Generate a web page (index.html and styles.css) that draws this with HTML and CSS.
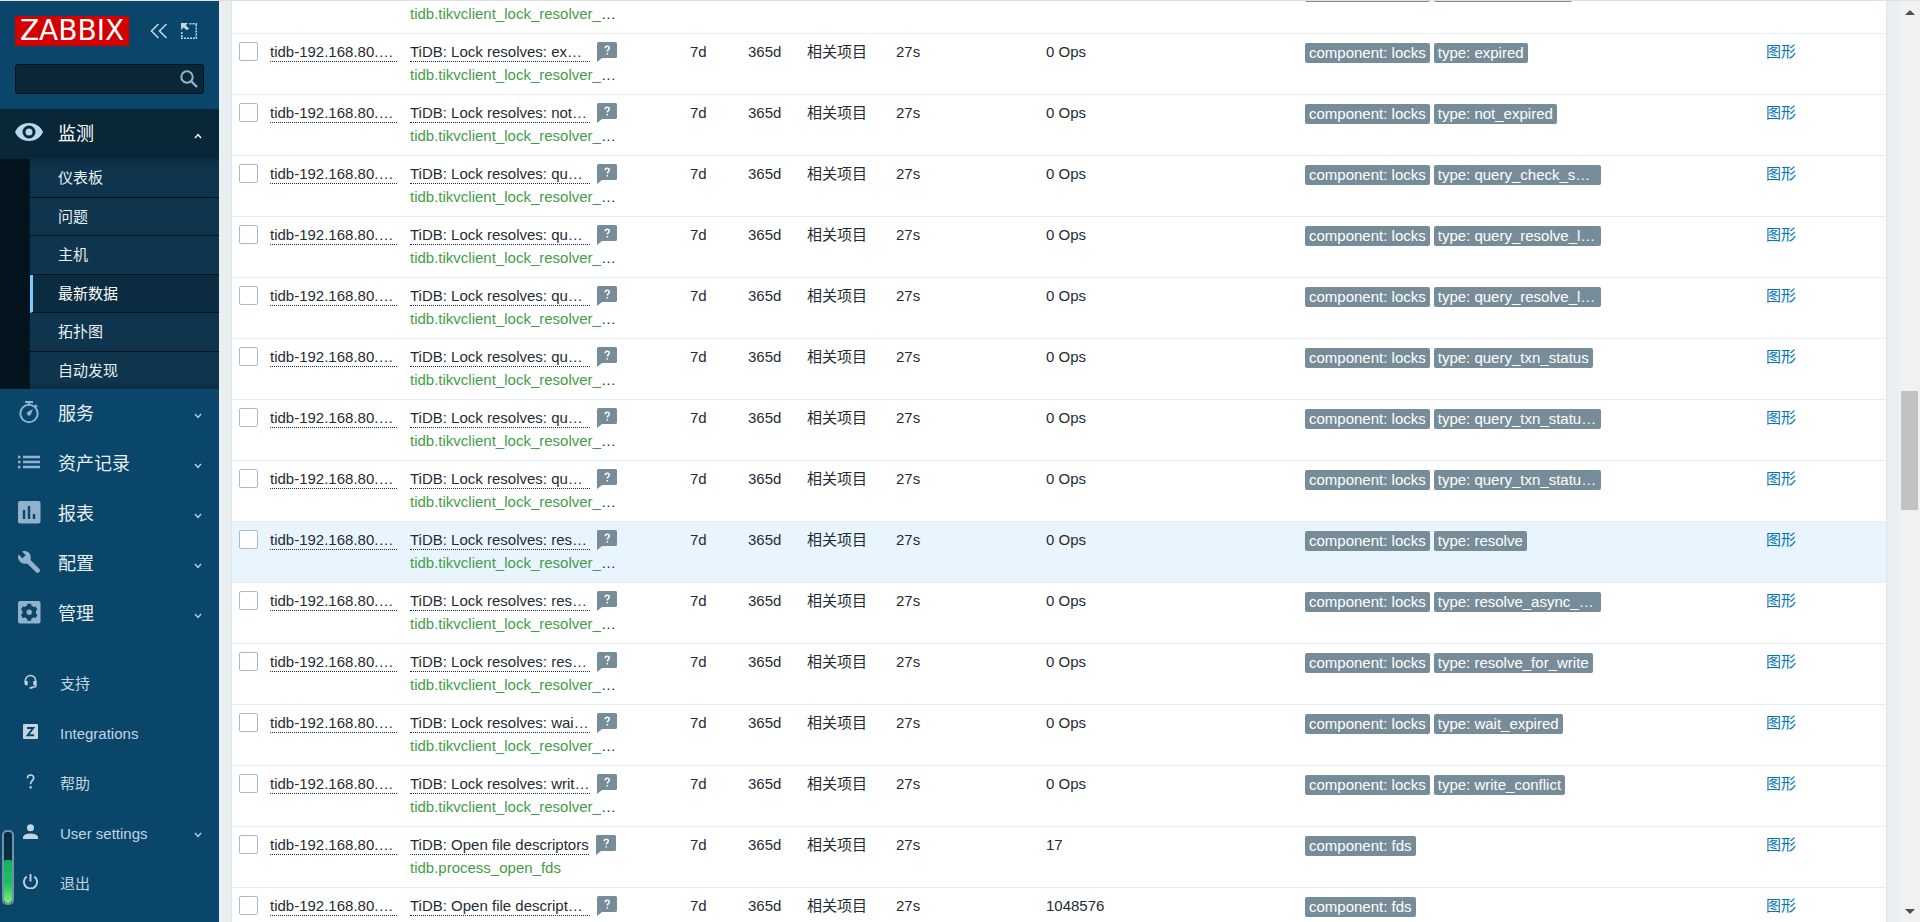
FILE: index.html
```html
<!DOCTYPE html>
<html lang="zh-CN">
<head>
<meta charset="utf-8">
<title>Zabbix - 最新数据</title>
<link rel="stylesheet" href="styles.css">
</head>
<body>
<svg class="defs" aria-hidden="true">
  <symbol id="hint" viewBox="0 0 20 20"><path d="M1.500 0H18.500A1.500 1.500 0 0 1 20 1.500V14.500A1.500 1.500 0 0 1 18.500 16H5L0 20V1.500A1.500 1.500 0 0 1 1.500 0Z" fill="#768d99"/><path d="M8.200 6.200C8.200 3.700 12.300 3.700 12.300 6C12.300 7.600 10.300 7.600 10.300 9.600M10.300 10.900V12.400" fill="none" stroke="#fff" stroke-width="1.500"/></symbol>
  <symbol id="down" viewBox="0 0 8 6"><path d="M1 1L4 4.500L7 1" fill="none" stroke="currentColor" stroke-width="1.400"/></symbol>
</svg>

<aside class="sidebar">
  <header class="brand">
    <a class="logo" href="#">ZABBIX</a>
    <button class="icon-button" type="button" aria-label="Collapse sidebar"><svg width="18" height="16" viewBox="0 0 18 16"><path d="M8.500 1L1.500 8L8.500 15M16.500 1L9.500 8L16.500 15" fill="none" stroke="currentColor" stroke-width="1.600"/></svg></button>
    <button class="icon-button" type="button" aria-label="Hide sidebar"><svg width="16" height="16" viewBox="0 0 16 16"><path d="M0 0H7L4.800 2.200L8 5.400L6 7.300L2.500 4.500L0 7Z" fill="currentColor"/><path d="M8.500 .8H16M15.200 1.500V15M0 15.200H16M.8 9V15" fill="none" stroke="currentColor" stroke-width="1.500" stroke-dasharray="2 1"/></svg></button>
  </header>
  <form class="search">
    <input class="search-input" type="text" aria-label="Search">
    <button class="search-button" type="button" aria-label="Search"><svg width="18" height="18" viewBox="0 0 18 18"><circle cx="7" cy="7" r="5.700" fill="none" stroke="currentColor" stroke-width="2"/><path d="M11 11L17 17" stroke="currentColor" stroke-width="2.400"/></svg></button>
  </form>
  <nav class="menu">
    <a class="menu-item open" href="#"><svg class="menu-icon" viewBox="0 0 28 28"><path d="M0 14C5 2 23 2 28 14C23 26 5 26 0 14Z" fill="#b8d6ec"/><circle cx="14" cy="14" r="5" fill="none" stroke="#0a2738" stroke-width="3"/></svg><span class="label">监测</span><svg class="chevron up"><use href="#down"/></svg></a>
    <div class="submenu">
      <a href="#">仪表板</a>
      <a href="#">问题</a>
      <a href="#">主机</a>
      <a class="selected" href="#">最新数据</a>
      <a href="#">拓扑图</a>
      <a href="#">自动发现</a>
    </div>
    <a class="menu-item" href="#"><svg class="menu-icon" viewBox="0 0 28 28"><circle cx="14" cy="15.500" r="8.700" fill="none" stroke="currentColor" stroke-width="2"/><path d="M10 4H18M14 4V7M20 7L22 9" stroke="currentColor" stroke-width="2" fill="none"/><path d="M18 11L15.700 17A2 2 0 1 1 12.500 14Z" fill="currentColor"/></svg><span class="label">服务</span><svg class="chevron"><use href="#down"/></svg></a>
    <a class="menu-item" href="#"><svg class="menu-icon" viewBox="0 0 28 28"><path d="M3 9H5.500M3 14H5.500M3 19H5.500M8 9H25M8 14H25M8 19H25" stroke="currentColor" stroke-width="2.300"/></svg><span class="label">资产记录</span><svg class="chevron"><use href="#down"/></svg></a>
    <a class="menu-item" href="#"><svg class="menu-icon" viewBox="0 0 28 28"><rect x="3" y="3" width="22.500" height="22.500" rx="2" fill="currentColor"/><path d="M9 12V21M14 8V21M19 16V21" stroke="#0a466a" stroke-width="2.400"/></svg><span class="label">报表</span><svg class="chevron"><use href="#down"/></svg></a>
    <a class="menu-item" href="#"><svg class="menu-icon" viewBox="0 0 28 28"><path d="M7 3.500C11 2 16 4.500 15.800 10L15.500 12L24.500 21C25.400 22 25.300 23 24.500 23.800L23.700 24.600C23 25.200 22 25.200 21.300 24.500L12.200 15.400C7.500 17 2.500 13 3 8L3.600 6.500L7.300 10.200L10.800 7.200Z" fill="currentColor"/></svg><span class="label">配置</span><svg class="chevron"><use href="#down"/></svg></a>
    <a class="menu-item" href="#"><svg class="menu-icon" viewBox="0 0 28 28"><rect x="3" y="3" width="22.500" height="22.500" rx="2" fill="currentColor"/><circle cx="14.200" cy="14.200" r="4.800" fill="none" stroke="#0a466a" stroke-width="4.200"/><path d="M14.200 5.700V9M14.200 19.400V22.700M6.900 10L9.800 11.700M18.600 16.700L21.500 18.400M6.900 18.400L9.800 16.700M18.600 11.700L21.500 10" stroke="#0a466a" stroke-width="4"/></svg><span class="label">管理</span><svg class="chevron"><use href="#down"/></svg></a>
  </nav>
  <nav class="menu secondary">
    <a class="menu-item" href="#"><svg class="menu-icon" viewBox="0 0 16 16"><path d="M2.500 9V7A5.500 5.500 0 0 1 13.500 7V13.500L8.500 14.500" fill="none" stroke="currentColor" stroke-width="1.600"/><path d="M1.700 7.500H5V12H3A1.500 1.500 0 0 1 1.700 10.500ZM11 7.500H14.300V12H11ZM7 13.800H11L10 15.700H7Z" fill="currentColor"/></svg><span class="label">支持</span></a>
    <a class="menu-item" href="#"><svg class="menu-icon" viewBox="0 0 16 16"><rect width="16" height="16" rx="1" fill="currentColor"/><path d="M4.300 4.200H11L5 12H11.800" fill="none" stroke="#0a466a" stroke-width="2"/></svg><span class="label">Integrations</span></a>
    <a class="menu-item" href="#"><svg class="menu-icon" viewBox="0 0 16 16"><path d="M4.800 4.500C4.800 0 11.400 0 11.400 4.200C11.400 7 8 7.200 8 11" fill="none" stroke="currentColor" stroke-width="1.800"/><path d="M7 13H9.200V15.500H7Z" fill="currentColor"/></svg><span class="label">帮助</span></a>
    <a class="menu-item" href="#"><svg class="menu-icon" viewBox="0 0 16 16"><circle cx="8" cy="4" r="3.800" fill="currentColor"/><path d="M0 16V13.500C2 9 14 9 16 13.500V16Z" fill="currentColor"/></svg><span class="label">User settings</span><svg class="chevron"><use href="#down"/></svg></a>
    <a class="menu-item" href="#"><svg class="menu-icon" viewBox="0 0 16 16"><path d="M4 2.700A7 7 0 1 0 12 2.700M8 0V8" fill="none" stroke="currentColor" stroke-width="2"/></svg><span class="label">退出</span></a>
  </nav>
  <div class="gauge"><div class="gauge-level"></div></div>
</aside>

<main class="content">
  <table class="data">
    <colgroup><col class="c-check"><col class="c-host"><col class="c-name"><col class="c-hist"><col class="c-trend"><col class="c-type"><col class="c-last"><col class="c-value"><col class="c-tags"><col class="c-link"></colgroup>
    <tbody>
    <tr><td><input type="checkbox" aria-label="Select item"></td><td><a class="dotted" href="#">tidb-192.168.80.…</a></td><td><div class="name"><a class="dotted" href="#">TiDB: Lock resolves: …</a><button class="hint" type="button" aria-label="Description"><svg><use href="#hint"/></svg></button></div><div class="key">tidb.tikvclient_lock_resolver_<span>…</span></div></td><td>7d</td><td>365d</td><td>相关项目</td><td>27s</td><td>0 Ops</td><td><div class="tags"><span class="tag">component: locks</span><span class="tag">type: batch_resolve</span></div></td><td><a href="#">图形</a></td></tr>
    <tr><td><input type="checkbox" aria-label="Select item"></td><td><a class="dotted" href="#">tidb-192.168.80.…</a></td><td><div class="name"><a class="dotted cut" href="#">TiDB: Lock resolves: ex…</a><button class="hint" type="button" aria-label="Description"><svg><use href="#hint"/></svg></button></div><div class="key">tidb.tikvclient_lock_resolver_<span>…</span></div></td><td>7d</td><td>365d</td><td>相关项目</td><td>27s</td><td>0 Ops</td><td><div class="tags"><span class="tag">component: locks</span><span class="tag">type: expired</span></div></td><td><a href="#">图形</a></td></tr>
    <tr><td><input type="checkbox" aria-label="Select item"></td><td><a class="dotted" href="#">tidb-192.168.80.…</a></td><td><div class="name"><a class="dotted cut" href="#">TiDB: Lock resolves: not…</a><button class="hint" type="button" aria-label="Description"><svg><use href="#hint"/></svg></button></div><div class="key">tidb.tikvclient_lock_resolver_<span>…</span></div></td><td>7d</td><td>365d</td><td>相关项目</td><td>27s</td><td>0 Ops</td><td><div class="tags"><span class="tag">component: locks</span><span class="tag">type: not_expired</span></div></td><td><a href="#">图形</a></td></tr>
    <tr><td><input type="checkbox" aria-label="Select item"></td><td><a class="dotted" href="#">tidb-192.168.80.…</a></td><td><div class="name"><a class="dotted cut" href="#">TiDB: Lock resolves: qu…</a><button class="hint" type="button" aria-label="Description"><svg><use href="#hint"/></svg></button></div><div class="key">tidb.tikvclient_lock_resolver_<span>…</span></div></td><td>7d</td><td>365d</td><td>相关项目</td><td>27s</td><td>0 Ops</td><td><div class="tags"><span class="tag">component: locks</span><span class="tag full">type: query_check_s…</span></div></td><td><a href="#">图形</a></td></tr>
    <tr><td><input type="checkbox" aria-label="Select item"></td><td><a class="dotted" href="#">tidb-192.168.80.…</a></td><td><div class="name"><a class="dotted cut" href="#">TiDB: Lock resolves: qu…</a><button class="hint" type="button" aria-label="Description"><svg><use href="#hint"/></svg></button></div><div class="key">tidb.tikvclient_lock_resolver_<span>…</span></div></td><td>7d</td><td>365d</td><td>相关项目</td><td>27s</td><td>0 Ops</td><td><div class="tags"><span class="tag">component: locks</span><span class="tag full">type: query_resolve_l…</span></div></td><td><a href="#">图形</a></td></tr>
    <tr><td><input type="checkbox" aria-label="Select item"></td><td><a class="dotted" href="#">tidb-192.168.80.…</a></td><td><div class="name"><a class="dotted cut" href="#">TiDB: Lock resolves: qu…</a><button class="hint" type="button" aria-label="Description"><svg><use href="#hint"/></svg></button></div><div class="key">tidb.tikvclient_lock_resolver_<span>…</span></div></td><td>7d</td><td>365d</td><td>相关项目</td><td>27s</td><td>0 Ops</td><td><div class="tags"><span class="tag">component: locks</span><span class="tag full">type: query_resolve_l…</span></div></td><td><a href="#">图形</a></td></tr>
    <tr><td><input type="checkbox" aria-label="Select item"></td><td><a class="dotted" href="#">tidb-192.168.80.…</a></td><td><div class="name"><a class="dotted cut" href="#">TiDB: Lock resolves: qu…</a><button class="hint" type="button" aria-label="Description"><svg><use href="#hint"/></svg></button></div><div class="key">tidb.tikvclient_lock_resolver_<span>…</span></div></td><td>7d</td><td>365d</td><td>相关项目</td><td>27s</td><td>0 Ops</td><td><div class="tags"><span class="tag">component: locks</span><span class="tag">type: query_txn_status</span></div></td><td><a href="#">图形</a></td></tr>
    <tr><td><input type="checkbox" aria-label="Select item"></td><td><a class="dotted" href="#">tidb-192.168.80.…</a></td><td><div class="name"><a class="dotted cut" href="#">TiDB: Lock resolves: qu…</a><button class="hint" type="button" aria-label="Description"><svg><use href="#hint"/></svg></button></div><div class="key">tidb.tikvclient_lock_resolver_<span>…</span></div></td><td>7d</td><td>365d</td><td>相关项目</td><td>27s</td><td>0 Ops</td><td><div class="tags"><span class="tag">component: locks</span><span class="tag full">type: query_txn_statu…</span></div></td><td><a href="#">图形</a></td></tr>
    <tr><td><input type="checkbox" aria-label="Select item"></td><td><a class="dotted" href="#">tidb-192.168.80.…</a></td><td><div class="name"><a class="dotted cut" href="#">TiDB: Lock resolves: qu…</a><button class="hint" type="button" aria-label="Description"><svg><use href="#hint"/></svg></button></div><div class="key">tidb.tikvclient_lock_resolver_<span>…</span></div></td><td>7d</td><td>365d</td><td>相关项目</td><td>27s</td><td>0 Ops</td><td><div class="tags"><span class="tag">component: locks</span><span class="tag full">type: query_txn_statu…</span></div></td><td><a href="#">图形</a></td></tr>
    <tr class="hovered"><td><input type="checkbox" aria-label="Select item"></td><td><a class="dotted" href="#">tidb-192.168.80.…</a></td><td><div class="name"><a class="dotted cut" href="#">TiDB: Lock resolves: res…</a><button class="hint" type="button" aria-label="Description"><svg><use href="#hint"/></svg></button></div><div class="key">tidb.tikvclient_lock_resolver_<span>…</span></div></td><td>7d</td><td>365d</td><td>相关项目</td><td>27s</td><td>0 Ops</td><td><div class="tags"><span class="tag">component: locks</span><span class="tag">type: resolve</span></div></td><td><a href="#">图形</a></td></tr>
    <tr><td><input type="checkbox" aria-label="Select item"></td><td><a class="dotted" href="#">tidb-192.168.80.…</a></td><td><div class="name"><a class="dotted cut" href="#">TiDB: Lock resolves: res…</a><button class="hint" type="button" aria-label="Description"><svg><use href="#hint"/></svg></button></div><div class="key">tidb.tikvclient_lock_resolver_<span>…</span></div></td><td>7d</td><td>365d</td><td>相关项目</td><td>27s</td><td>0 Ops</td><td><div class="tags"><span class="tag">component: locks</span><span class="tag full">type: resolve_async_…</span></div></td><td><a href="#">图形</a></td></tr>
    <tr><td><input type="checkbox" aria-label="Select item"></td><td><a class="dotted" href="#">tidb-192.168.80.…</a></td><td><div class="name"><a class="dotted cut" href="#">TiDB: Lock resolves: res…</a><button class="hint" type="button" aria-label="Description"><svg><use href="#hint"/></svg></button></div><div class="key">tidb.tikvclient_lock_resolver_<span>…</span></div></td><td>7d</td><td>365d</td><td>相关项目</td><td>27s</td><td>0 Ops</td><td><div class="tags"><span class="tag">component: locks</span><span class="tag">type: resolve_for_write</span></div></td><td><a href="#">图形</a></td></tr>
    <tr><td><input type="checkbox" aria-label="Select item"></td><td><a class="dotted" href="#">tidb-192.168.80.…</a></td><td><div class="name"><a class="dotted cut" href="#">TiDB: Lock resolves: wai…</a><button class="hint" type="button" aria-label="Description"><svg><use href="#hint"/></svg></button></div><div class="key">tidb.tikvclient_lock_resolver_<span>…</span></div></td><td>7d</td><td>365d</td><td>相关项目</td><td>27s</td><td>0 Ops</td><td><div class="tags"><span class="tag">component: locks</span><span class="tag">type: wait_expired</span></div></td><td><a href="#">图形</a></td></tr>
    <tr><td><input type="checkbox" aria-label="Select item"></td><td><a class="dotted" href="#">tidb-192.168.80.…</a></td><td><div class="name"><a class="dotted cut" href="#">TiDB: Lock resolves: writ…</a><button class="hint" type="button" aria-label="Description"><svg><use href="#hint"/></svg></button></div><div class="key">tidb.tikvclient_lock_resolver_<span>…</span></div></td><td>7d</td><td>365d</td><td>相关项目</td><td>27s</td><td>0 Ops</td><td><div class="tags"><span class="tag">component: locks</span><span class="tag">type: write_conflict</span></div></td><td><a href="#">图形</a></td></tr>
    <tr><td><input type="checkbox" aria-label="Select item"></td><td><a class="dotted" href="#">tidb-192.168.80.…</a></td><td><div class="name"><a class="dotted" href="#">TiDB: Open file descriptors</a><button class="hint" type="button" aria-label="Description"><svg><use href="#hint"/></svg></button></div><div class="key">tidb.process_open_fds</div></td><td>7d</td><td>365d</td><td>相关项目</td><td>27s</td><td>17</td><td><div class="tags"><span class="tag">component: fds</span></div></td><td><a href="#">图形</a></td></tr>
    <tr><td><input type="checkbox" aria-label="Select item"></td><td><a class="dotted" href="#">tidb-192.168.80.…</a></td><td><div class="name"><a class="dotted cut" href="#">TiDB: Open file descript…</a><button class="hint" type="button" aria-label="Description"><svg><use href="#hint"/></svg></button></div><div class="key">tidb.process_max_fds</div></td><td>7d</td><td>365d</td><td>相关项目</td><td>27s</td><td>1048576</td><td><div class="tags"><span class="tag">component: fds</span></div></td><td><a href="#">图形</a></td></tr>
    </tbody>
  </table>
</main>

<div class="scrollbar">
  <svg width="10" height="5" viewBox="0 0 10 5"><path d="M0 5L5 0L10 5Z" fill="#505050"/></svg>
  <div class="track"><div class="thumb"></div></div>
  <svg width="10" height="5" viewBox="0 0 10 5"><path d="M0 0L5 5L10 0Z" fill="#505050"/></svg>
</div>
</body>
</html>
```

FILE: styles.css
```css
* { box-sizing: border-box; }

body {
  margin: 0;
  height: 100vh;
  display: flex;
  overflow: hidden;
  border-top: 1px solid #e0e0e0;
  background: #e9eef1;
  color: #1f2c33;
  font: 15px/23px "Liberation Sans", Arial, "Noto Sans CJK SC", sans-serif;
}

a { color: #0275b8; text-decoration: none; }
button { padding: 0; border: 0; background: none; color: inherit; cursor: pointer; }
svg { display: block; }
.defs { position: absolute; width: 0; height: 0; }

/* Sidebar */
.sidebar {
  position: relative;
  flex: 0 0 219px;
  display: flex;
  flex-direction: column;
  padding-bottom: 14px;
  background: #0a466a;
  color: #c3d5e1;
}

.brand {
  display: flex;
  align-items: center;
  padding: 15px 15px 0;
}

.logo {
  width: 114px;
  height: 30px;
  margin-right: 21px;
  background: #d40000;
  color: #fff;
  font: 28px/30px "DejaVu Sans", sans-serif;
  text-align: center;
}

.icon-button { margin-right: 13px; }
.icon-button:last-child { margin-right: 0; }

.search { position: relative; margin: 18px 15px 15px; }

.search-input {
  display: block;
  width: 100%;
  height: 30px;
  padding: 0 32px 0 8px;
  border: 1px solid #02111b;
  border-radius: 3px;
  background: #0a2738;
  color: #fff;
  font: inherit;
}

.search-button { position: absolute; right: 6px; top: 6px; color: #8fb3cd; }

.menu-item {
  display: flex;
  align-items: center;
  height: 50px;
  padding: 0 17px 0 15px;
  color: #8fb3cd;
}

.menu-icon { width: 28px; height: 28px; margin: 0 15px 4px 0; }
.label { flex: 1; color: #e8eff4; font-size: 18px; }
.chevron { width: 8px; height: 6px; margin-top: 3px; color: #b9cfdf; }
.chevron.up { transform: rotate(180deg); }
.open { background: #0a2738; color: #fff; }
.open .label, .open .chevron { color: #fff; }

.submenu {
  display: flex;
  flex-direction: column;
  height: 230px;
  padding-left: 30px;
  background: #04141e;
}

.submenu a {
  flex: 1;
  display: flex;
  align-items: center;
  padding-left: 28px;
  border-bottom: 1px solid #04141e;
  background: #0f344d;
  color: #e8eff4;
}

.submenu a:first-child { background: linear-gradient(#0d2d42, #0f344d 10px); }
.submenu a:last-child { border-bottom: 0; background: linear-gradient(#0f344d 28px, #0d2d42); }

.submenu .selected {
  padding-left: 25px;
  border-left: 3px solid #7cc8ff;
  background: #0a2b40;
  color: #fff;
}

.secondary { margin-top: auto; }
.secondary .menu-item { padding-left: 23px; color: #c3d5e1; }
.secondary .menu-icon { width: 15px; height: 15px; margin: 0 22px 3px 0; }
.secondary .label { color: #c3d5e1; font-size: 15px; }

.gauge {
  position: absolute;
  left: 2px;
  bottom: 17px;
  width: 12px;
  height: 75px;
  display: flex;
  align-items: flex-end;
  border: 2px solid #7391a5;
  border-radius: 5px;
  background: #072c45;
}

.gauge-level {
  width: 100%;
  height: 60%;
  border-radius: 2px 2px 4px 4px;
  background: linear-gradient(#12b25b, #1fbf60 55%, #7df47c);
}

/* Item table */
.content {
  flex: 1;
  min-width: 0;
  padding: 0 12px;
  overflow: hidden;
}

.data {
  width: 100%;
  margin-top: -28px;
  table-layout: fixed;
  border-collapse: separate;
  border-spacing: 0;
  border: 1px solid #dfe4e7;
  border-width: 0 1px;
  background: #fff;
}

.c-check { width: 38px; }
.c-host { width: 140px; }
.c-name { width: 280px; }
.c-hist { width: 58px; }
.c-trend { width: 59px; }
.c-type { width: 89px; }
.c-last { width: 150px; }
.c-value { width: 259px; }
.c-link { width: 120px; }

td {
  padding: 6px 0 8px;
  border-bottom: 1px solid #ebeef0;
  vertical-align: top;
  white-space: nowrap;
}

td:nth-child(2) { padding-right: 13px; }
.hovered td { background: #e8f5ff; }

input[type="checkbox"] {
  appearance: none;
  display: block;
  width: 19px;
  height: 19px;
  margin: 2px 0 0 7px;
  border: 1px solid #acbbc2;
  border-radius: 2px;
  background: #fff;
}

.dotted {
  display: block;
  padding-top: 2px;
  border-bottom: 1px dotted #1f2c33;
  color: #1f2c33;
  line-height: 19px;
}

.name { display: flex; align-items: flex-start; height: 23px; gap: 7px; }
.cut { width: 180px; }
.hint { margin-top: 2px; }
.hint svg { width: 20px; height: 20px; }
.key { color: #429e47; }
.key span { color: #1f2c33; }

.tags { display: flex; gap: 4px; margin-top: 3px; }

.tag {
  max-width: 167px;
  padding: 0 4px;
  border-radius: 2px;
  background: #768d99;
  color: #fff;
  line-height: 20px;
}

.full { width: 167px; }

/* Page scrollbar */
.scrollbar {
  flex: 0 0 21px;
  display: flex;
  flex-direction: column;
  align-items: center;
  padding: 9px 0 8px;
  background: #f1f1f1;
}

.track { flex: 1; width: 17px; padding-top: 376px; }
.thumb { height: 119px; background: #c1c1c1; }
```
